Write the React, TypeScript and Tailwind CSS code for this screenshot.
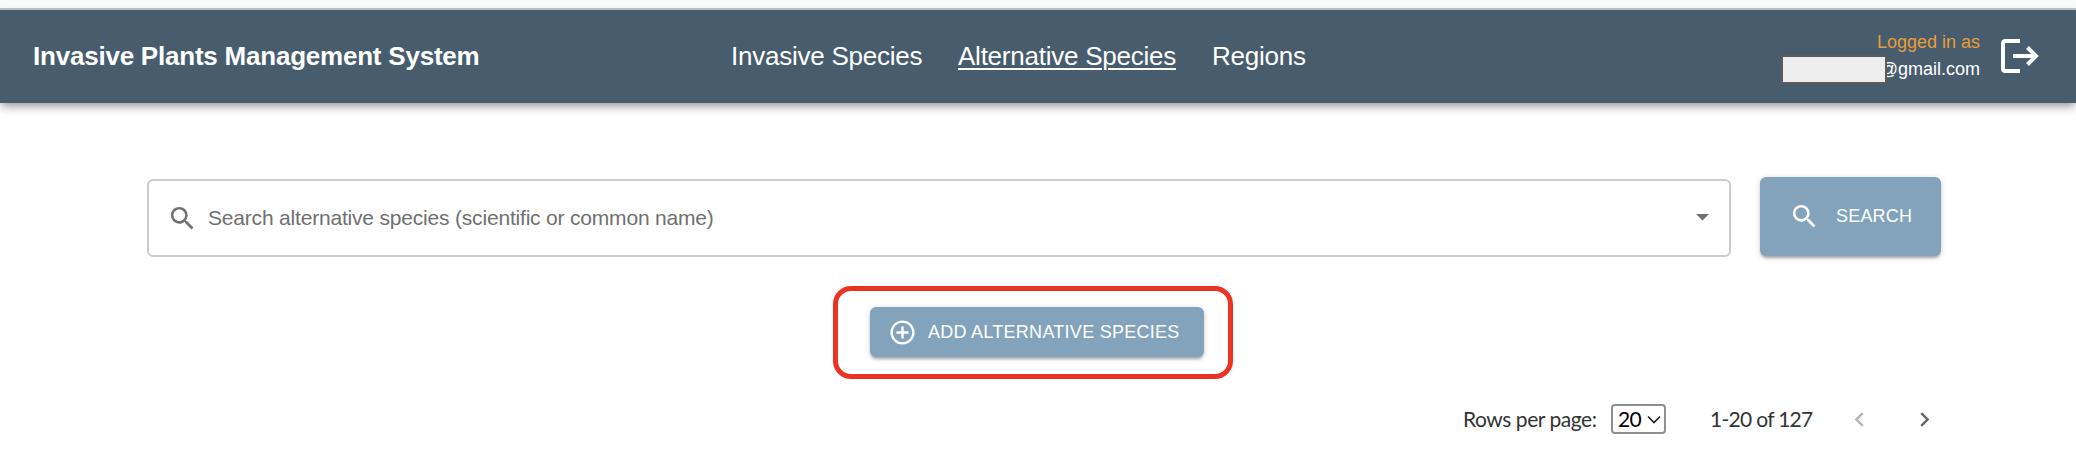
import React from "react";
import { MdSearch, MdArrowDropDown, MdChevronLeft, MdChevronRight, MdControlPoint } from "react-icons/md";

const helv = "font-['Liberation_Sans',Arial,sans-serif]";

function LogoutIcon() {
  return (
    <svg width="38" height="34" viewBox="0 0 38 34" fill="none" stroke="#fff" strokeWidth="4" strokeLinejoin="round">
      <path d="M19 2H4.5Q2 2 2 4.5V29.5Q2 32 4.5 32H19" />
      <path d="M12 17H35M26.5 8.5L35 17L26.5 25.5" strokeLinejoin="miter" />
    </svg>
  );
}

function Header() {
  return (
    <header className={`${helv} flex h-[93px] items-start bg-[#475d6d] text-white shadow-[0_4px_8px_-2px_rgba(0,0,0,0.3),0_5px_10px_rgba(0,0,0,0.16)]`}>
      <h1 className="ml-[33px] mt-[31px] w-[698px] whitespace-nowrap text-[26px] font-bold leading-[30px] tracking-[-0.22px]">
        Invasive Plants Management System
      </h1>
      <nav className="mt-[31px] flex text-[26px] leading-[30px] tracking-[-0.24px] whitespace-nowrap">
        <a className="w-[227px]">Invasive Species</a>
        <a className="w-[254px] underline decoration-2 underline-offset-[3px]">Alternative Species</a>
        <a>Regions</a>
      </nav>
      <div className="ml-auto mt-[18px] flex flex-col items-end text-lg leading-7">
        <span className="text-[#e69c36]">Logged in as</span>
        <span className="-mt-px flex items-center">
          <span className="relative z-10 -mr-[7px] h-[29px] w-[106px] border-2 border-[#5d5a59] bg-[#eeeeee]" />
          <span className="-mt-px">@gmail.com</span>
        </span>
      </div>
      <button className="ml-[21px] mr-[37px] mt-[29px]">
        <LogoutIcon />
      </button>
    </header>
  );
}

const raised = "rounded-[6px] bg-[#83a3bc] text-white shadow-[0_3px_3px_-1px_rgba(0,0,0,0.28),0_1px_6px_rgba(0,0,0,0.16)]";

export default function App() {
  return (
    <div className="h-[470px] w-[2076px] overflow-hidden bg-white">
      <div className="h-[10px] border-b-2 border-[#c1c4c1] bg-[#f9fafc]" />
      <Header />
      <main>
        <div className={`${helv} ml-[147px] mt-[74px] flex items-start`}>
          <div className="mt-[2px] flex h-[78px] w-[1584px] items-center rounded-[6px] border-2 border-[#cccccc] text-[#707070]">
            <MdSearch className="ml-[18px]" size={31} />
            <span className="ml-[10px] text-[21px] tracking-[-0.19px] whitespace-nowrap">Search alternative species (scientific or common name)</span>
            <MdArrowDropDown className="mb-[3px] ml-auto mr-[11px]" size={31} />
          </div>
          <button className={`${raised} ml-[29px] flex h-[79px] w-[181px] items-center text-lg tracking-[0.2px]`}>
            <MdSearch className="ml-[29px]" size={31} />
            <span className="ml-4 -mt-px">SEARCH</span>
          </button>
        </div>
        <div className="ml-[833px] mt-[29px] h-[93px] w-[400px] rounded-[18px] border-[5px] border-[#ea3323] pl-[32px] pt-[16px]">
          <button className={`${helv} ${raised} flex h-[50px] w-[334px] items-center text-lg tracking-[0.27px] whitespace-nowrap`}>
            <MdControlPoint className="ml-[18px]" size={29} />
            <span className="-mt-px ml-[11px]">ADD ALTERNATIVE SPECIES</span>
          </button>
        </div>
        <div className="ml-[1463px] mt-[25px] flex h-[30px] items-center font-[Lato,sans-serif] text-[21px] whitespace-nowrap text-[#333]">
          <span className="w-[148px] tracking-[-0.45px]">Rows per page:</span>
          <button className="flex h-[30px] w-[55px] items-center rounded-[4px] border-2 border-[#8f8f8f] pl-[5px] text-black tracking-[-0.6px]">
            20
            <svg className="ml-[6px]" width="14" height="9" viewBox="0 0 14 9" fill="none" stroke="#222" strokeWidth="1.7">
              <path d="M1 1.5L7 7.5L13 1.5" />
            </svg>
          </button>
          <span className="ml-[44px] w-[135px] tracking-[-0.7px]">1-20 of 127</span>
          <MdChevronLeft size={29} className="text-[#b5b5b5]" />
          <MdChevronRight size={29} className="ml-9 text-[#666]" />
        </div>
      </main>
    </div>
  );
}
